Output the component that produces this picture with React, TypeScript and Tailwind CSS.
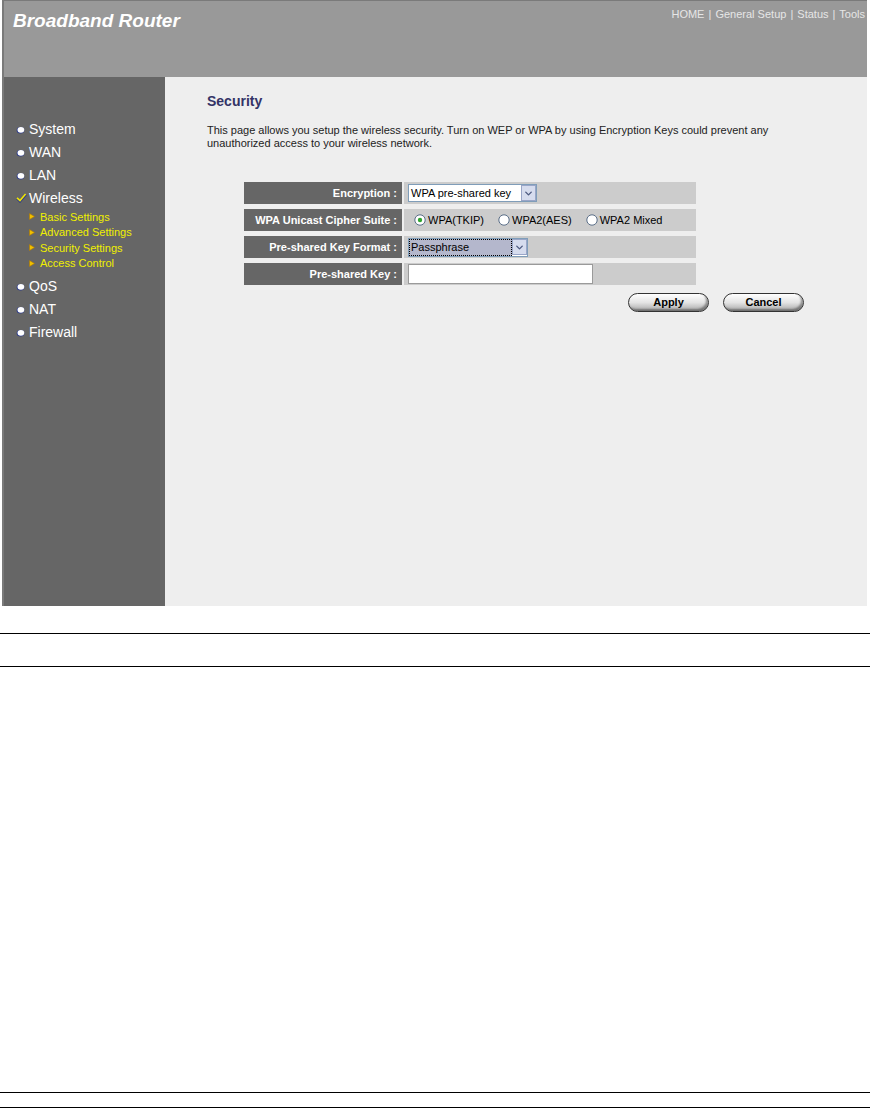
import { ChevronDown } from "lucide-react";

// left menu of the router admin page
const MENU_TOP = ["System", "WAN", "LAN"];
const MENU_BOTTOM = ["QoS", "NAT", "Firewall"];
const WIRELESS_SUB = ["Basic Settings", "Advanced Settings", "Security Settings", "Access Control"];

function Bullet() {
  return (
    <svg width="9" height="8" viewBox="0 0 9 8" className="shrink-0">
      <ellipse cx="4.5" cy="4.3" rx="3.8" ry="3.3" fill="#2b3a8a" />
      <ellipse cx="4.9" cy="3.8" rx="3.4" ry="2.9" fill="#ffffff" />
    </svg>
  );
}

function Check() {
  return (
    <svg width="11" height="10" viewBox="0 0 11 10" className="shrink-0">
      <path d="M1 5.5 L4 8.5 L10 1.5" fill="none" stroke="#2b3a8a" strokeWidth="2.2" />
      <path d="M1 4.8 L4 7.6 L9.6 1" fill="none" stroke="#f2e600" strokeWidth="1.6" />
    </svg>
  );
}

function Arrow() {
  return (
    <svg width="6" height="7" viewBox="0 0 6 7" className="shrink-0">
      <path d="M0.5 0.5 L5.5 3.5 L0.5 6.5 Z" fill="#f0c000" stroke="#b07a00" strokeWidth="0.6" />
    </svg>
  );
}

function Radio({ on }: { on?: boolean }) {
  return (
    <svg width="12" height="12" viewBox="0 0 12 12" className="shrink-0">
      <circle cx="6" cy="6" r="5.2" fill="#ffffff" stroke="#5a6e88" strokeWidth="1" />
      {on && <circle cx="6" cy="6" r="2.2" fill="#2fa52f" />}
    </svg>
  );
}

function SelectArrow() {
  return (
    <span className="flex h-[16px] w-[15px] items-center justify-center border border-[#9aa6c8] bg-[#d6dcee]">
      <ChevronDown className="size-[11px] text-[#4d5a80]" strokeWidth={3} />
    </span>
  );
}

function Row({ label, children }: { label: string; children: React.ReactNode }) {
  return (
    <div className="flex h-[22px] gap-[2px]">
      <div className="flex w-[158px] items-center justify-end bg-[#666666] pr-[5px] text-[11px] font-bold text-white">
        {label}
      </div>
      <div className="flex flex-1 items-center bg-[#cccccc] pl-[4px] text-[11px] text-black">{children}</div>
    </div>
  );
}

function PillButton({ label }: { label: string }) {
  return (
    <button className="h-[19px] w-[81px] rounded-full border border-[#333333] bg-gradient-to-b from-[#ffffff] via-[#e4e4e4] to-[#a8a8a8] text-[11px] font-bold text-black shadow-[inset_-2px_-2px_2px_rgba(0,0,0,0.35)]">
      {label}
    </button>
  );
}

export default function App() {
  return (
    <div className="w-[870px] bg-white pb-px" style={{ fontFamily: '"Liberation Sans", Arial, sans-serif' }}>
      {/* router page frame */}
      <div className="ml-[2px] w-[865px] border-l-2 border-t border-[#7a7a7a]">
        <header className="flex h-[76px] items-start justify-between bg-[#999999] pl-[9px] pr-[2px]">
          <h1 className="mt-[6px] text-[19px] font-bold italic text-white">Broadband Router</h1>
          <nav className="mt-[5px] text-[11px] text-[#e6e6e6]">
            HOME <span className="px-px">|</span> General Setup <span className="px-px">|</span> Status <span className="px-px">|</span> Tools
          </nav>
        </header>

        <div className="flex h-[529px]">
          <aside className="w-[161px] bg-[#666666] pt-[41px] pl-[12px] text-[14px] text-white">
            {MENU_TOP.map((m) => (
              <div key={m} className="flex h-[23px] items-center gap-[4px]">
                <Bullet />
                {m}
              </div>
            ))}
            <div className="flex h-[22px] items-center gap-[2px]">
              <Check />
              Wireless
            </div>
            <ul className="pl-[13px] text-[11px] text-[#f0f000]">
              {WIRELESS_SUB.map((s) => (
                <li key={s} className="flex h-[15.5px] items-center gap-[5px]">
                  <Arrow />
                  {s}
                </li>
              ))}
            </ul>
            <div className="mt-[4px]">
              {MENU_BOTTOM.map((m) => (
                <div key={m} className="flex h-[23px] items-center gap-[4px]">
                  <Bullet />
                  {m}
                </div>
              ))}
            </div>
          </aside>

          <main className="flex-1 bg-[#eeeeee] pl-[42px] pt-[14px]">
            <h2 className="text-[14px] font-bold text-[#333366]">Security</h2>
            <p className="mt-[12px] text-[11px] leading-[13px] text-[#222222]">
              This page allows you setup the wireless security. Turn on WEP or WPA by using Encryption Keys could prevent any
              <br />
              unauthorized access to your wireless network.
            </p>

            <div className="ml-[37px] mt-[32px] flex w-[452px] flex-col gap-[5px]">
              <Row label="Encryption :">
                <div className="flex h-[18px] items-center border border-[#7f9db9] bg-white pl-[2px]">
                  <span className="w-[110px]">WPA pre-shared key</span>
                  <SelectArrow />
                </div>
              </Row>
              <Row label="WPA Unicast Cipher Suite :">
                <div className="flex items-center gap-[14px] pl-[6px]">
                  <label className="flex items-center gap-[2px]">
                    <Radio on />
                    WPA(TKIP)
                  </label>
                  <label className="flex items-center gap-[2px]">
                    <Radio />
                    WPA2(AES)
                  </label>
                  <label className="flex items-center gap-[2px]">
                    <Radio />
                    WPA2 Mixed
                  </label>
                </div>
              </Row>
              <Row label="Pre-shared Key Format :">
                <div className="flex h-[19px] items-center border border-[#7f9db9] bg-white">
                  <span className="flex h-full w-[103px] items-center border border-dotted border-black bg-[#b4b7cc] pl-[1px]">
                    Passphrase
                  </span>
                  <SelectArrow />
                </div>
              </Row>
              <Row label="Pre-shared Key :">
                <div className="h-[20px] w-[185px] border border-[#9a9a9a] bg-white" />
              </Row>
            </div>

            <div className="ml-[421px] mt-[8px] flex gap-[14px]">
              <PillButton label="Apply" />
              <PillButton label="Cancel" />
            </div>
          </main>
        </div>
      </div>

      {/* document rules below the screenshot */}
      <div className="mt-[27px] h-px bg-black" />
      <div className="mt-[32px] h-px bg-black" />
      <div className="mt-[425px] h-px bg-black" />
      <div className="mt-[14px] h-px bg-black" />
    </div>
  );
}
